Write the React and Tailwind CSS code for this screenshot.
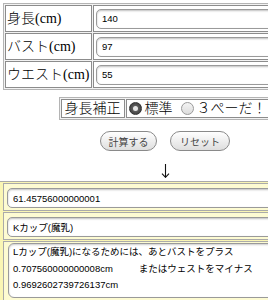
import React from "react";

const labels = [
  { label: "身長(cm)", value: "140" },
  { label: "バスト(cm)", value: "97" },
  { label: "ウエスト(cm)", value: "55" },
];

const inputCls =
  "block h-[20px] w-full rounded-[5px] border border-[#9a9a9a] bg-white pl-[5px] text-[9.5px] font-normal text-black outline-none shadow-[inset_0_1px_2px_rgba(0,0,0,0.25)] font-['Liberation_Sans','Noto_Sans_CJK_JP',sans-serif]";

const Radio = ({ checked }) =>
  checked ? (
    <span className="flex h-[13px] w-[13px] shrink-0 items-center justify-center rounded-full border border-[#333] bg-[radial-gradient(circle,#777_0%,#444_70%)]">
      <span className="h-[5px] w-[5px] rounded-full bg-[#e6e6e6]" />
    </span>
  ) : (
    <span className="h-[13px] w-[13px] shrink-0 rounded-full border border-[#9a9a9a] bg-[linear-gradient(#f4f4f4,#dcdcdc)]" />
  );

const Button = ({ children, width }) => (
  <button
    className={`flex h-[20px] items-center justify-center rounded-full border border-[#8a8a8a] bg-[linear-gradient(#ffffff,#dedede)] text-[10px] font-normal text-[#444] font-['Noto_Sans_CJK_JP',sans-serif] ${width}`}
  >
    {children}
  </button>
);

export default function App() {
  return (
    <div className="h-[300px] w-[268px] overflow-hidden bg-white">
      <div className="w-[330px] pt-[3px] font-['Liberation_Serif','Noto_Sans_CJK_JP',serif] font-light text-black">
        {/* input table */}
        <div className="ml-[3px] flex w-[324px] flex-col gap-px border border-[#b4b4b4] bg-[#f2f2f2] p-px">
          {labels.map((r) => (
            <div key={r.label} className="flex h-[27px] gap-px">
              <div className="flex w-[87px] shrink-0 items-center whitespace-nowrap border border-[#8c8c8c] bg-white pl-px text-[14px]">
                {r.label}
              </div>
              <div className="flex flex-1 items-center border border-[#8c8c8c] bg-white pl-[2px]">
                <input readOnly defaultValue={r.value} className={inputCls} />
              </div>
            </div>
          ))}
        </div>

        {/* height correction */}
        <div className="mx-auto mt-[7px] flex h-[23px] w-fit gap-px border border-[#b4b4b4] bg-[#f2f2f2] p-px">
          <div className="flex items-center whitespace-nowrap border border-[#8c8c8c] bg-white px-[3px] text-[14px]">
            身長補正
          </div>
          <div className="flex items-center gap-[3px] whitespace-nowrap border border-[#8c8c8c] bg-white px-[2px] text-[14px]">
            <Radio checked />
            <span>標準</span>
            <span className="ml-[2px]" />
            <Radio />
            <span>３ぺーだ！</span>
          </div>
        </div>

        {/* buttons */}
        <div className="mt-[11px] flex justify-center gap-[13px]">
          <Button width="w-[57px]">計算する</Button>
          <Button width="w-[60px]">リセット</Button>
        </div>

        <div className="flex h-[30px] items-end justify-center pb-[3px]">
          <svg width="9" height="14" viewBox="0 0 9 14" fill="none" stroke="#111" strokeWidth="1.1">
            <path d="M4.5 0V13.3" />
            <path d="M1 9.6L4.5 13.3L8 9.6" />
          </svg>
        </div>

        {/* results */}
        <div className="flex flex-col gap-px border-t border-[#aaa] bg-[#faf6b4] pl-[3px] pt-px">
          <div className="border border-[#aaa] bg-[#fdfbd2] pb-[2px] pl-[3px] pt-[4px]">
            <input readOnly defaultValue="61.45756000000001" className={inputCls} />
          </div>
          <div className="border border-[#aaa] bg-[#fdfbd2] pb-[2px] pl-[3px] pt-[4px]">
            <input readOnly defaultValue="Kカップ(魔乳)" className={inputCls} />
          </div>
          <div className="h-[70px] border border-[#aaa] bg-[#fdfbd2] pl-[4px] pt-px">
            <div className="rounded-[6px] border border-[#9a9a9a] bg-white pb-[3px] pl-[4px] pt-0 text-[9.5px] font-normal shadow-[inset_0_1px_2px_rgba(0,0,0,0.2)] font-['Liberation_Sans','Noto_Sans_CJK_JP',sans-serif]">
              <div className="h-[16.5px] whitespace-nowrap leading-[16.5px]">Lカップ(魔乳)になるためには、あとバストをプラス</div>
              <div className="h-[16.5px] whitespace-nowrap leading-[16.5px]">
                0.707560000000008cm<span className="inline-block w-[26px]" />またはウェストをマイナス
              </div>
              <div className="h-[16.5px] whitespace-nowrap leading-[16.5px]">0.9692602739726137cm</div>
            </div>
          </div>
        </div>
      </div>
    </div>
  );
}
